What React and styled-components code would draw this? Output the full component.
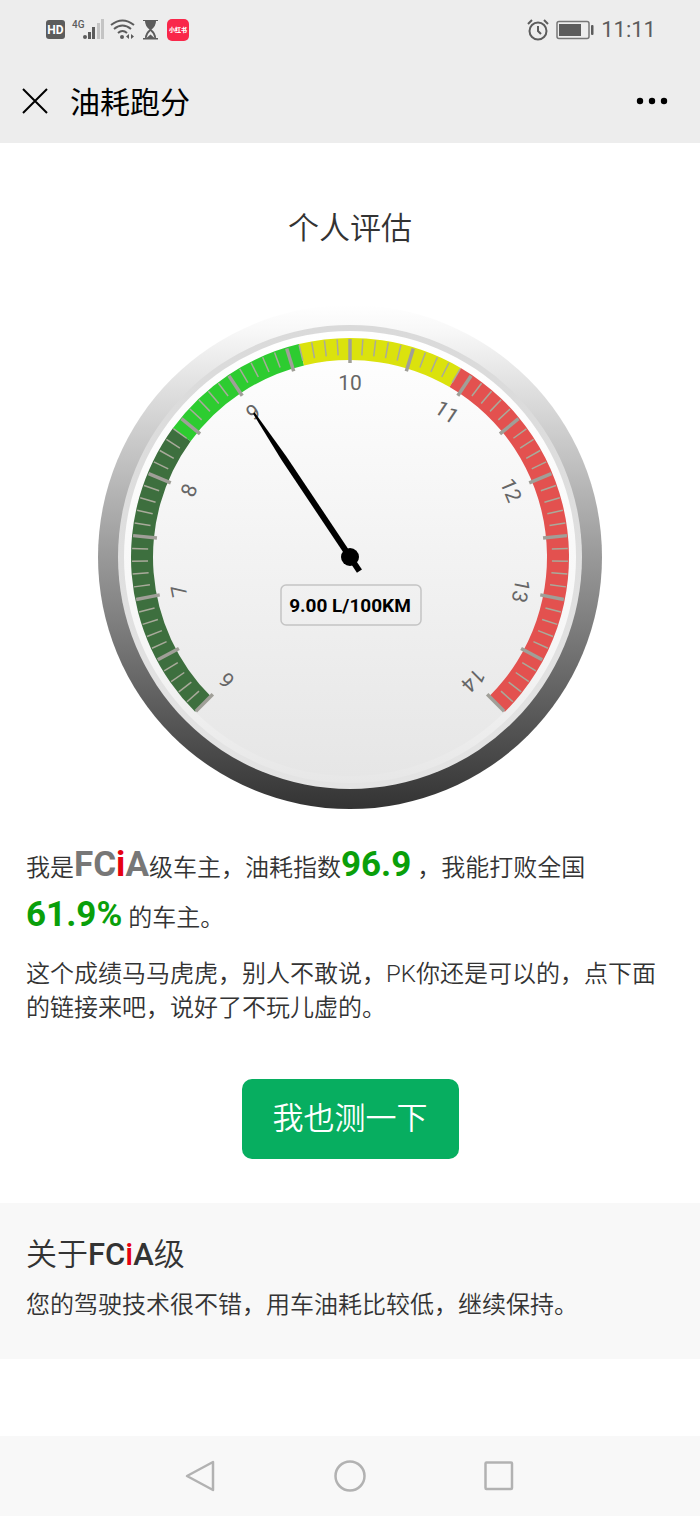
import React from 'react'
import styled, { createGlobalStyle } from 'styled-components'

const GlobalStyle = createGlobalStyle`
    * {
        box-sizing: border-box;
    }

    body {
        margin: 0;
        background: #fff;
        color: #333;
        font-family: Roboto, 'Noto Sans CJK SC', sans-serif;
        font-weight: 350;
    }

    button {
        font-family: inherit;
        font-weight: inherit;
        border: 0;
        padding: 0;
        background: none;
        cursor: pointer;
    }

    svg {
        display: block;
    }
`;

const Page = styled.div`
    min-height: 100vh;
    display: flex;
    flex-direction: column;
`;

const StatusBar = styled.div`
    height: 60px;
    padding: 0 44px 0 46px;
    display: flex;
    align-items: center;
    justify-content: space-between;
    background: #ededed;
    color: #5c5c5c;
`;

const StatusGroup = styled.div`
    display: flex;
    align-items: center;
    gap: ${props => props.$gap}px;
`;

const Clock = styled.span`
    font-size: 22px;
    line-height: 24px;
    font-weight: 400;
`;

const TitleBar = styled.header`
    height: 83px;
    padding: 0 32px 2px 22px;
    display: flex;
    align-items: center;
    background: #ededed;
    color: #000;

    h1 {
        flex: 1;
        margin: 4px 0 0 22px;
        font-size: 30px;
        line-height: 40px;
        font-weight: 400;
    }
`;

const Content = styled.main`
    flex: 1;
    padding-top: 62px;
`;

const Heading = styled.h2`
    margin: 0;
    text-align: center;
    font-size: 31px;
    line-height: 48px;
    font-weight: 350;
`;

const GaugeBox = styled.div`
    width: 72%;
    max-width: 504px;
    margin: 52px auto 0;

    svg {
        width: 100%;
        height: auto;
    }

    text {
        font-family: Roboto, sans-serif;
        text-anchor: middle;
    }
`;

const Summary = styled.p`
    margin: 34px 26px 0;
    font-size: 24px;
    line-height: 50px;
`;

const Score = styled.strong`
    color: #0a9f0a;
    font-size: 35px;
    line-height: 1;
    font-weight: 700;
`;

const Grade = styled.strong`
    color: ${props => props.$color || 'inherit'};
    font-size: ${props => props.$size}px;
    line-height: 1;
    font-weight: ${props => props.$weight};

    em {
        font-style: normal;
        color: #e60012;
    }
`;

const Comment = styled.p`
    margin: 14px 26px 0;
    font-size: 24px;
    line-height: 34px;
`;

const TestButton = styled.button`
    && {
        display: block;
        margin: 54px auto 0;
        padding: 0 31px 8px;
        height: 80px;
        border-radius: 10px;
        background: #07ae60;
        color: #fff;
        font-size: 31px;
    }
`;

const About = styled.section`
    margin-top: 44px;
    padding: 28px 26px 36px;
    background: #f8f8f8;

    h3 {
        margin: 0;
        font-size: 31px;
        line-height: 48px;
        font-weight: 350;
    }

    p {
        margin: 8px 0 0;
        font-size: 24px;
        line-height: 36px;
    }
`;

const NavBar = styled.nav`
    height: 80px;
    padding: 0 127px;
    display: grid;
    grid-template-columns: repeat(3, 1fr);
    background: #f8f8f8;

    button {
        display: flex;
        align-items: center;
        justify-content: center;
    }
`;

const CX = 252
const CY = 252
const MIN = 6
const MAX = 14
const VALUE = 9

const BANDS = [
    { from: 6, to: 8.4, color: '#3d6f3e' },
    { from: 8.4, to: 9.6, color: '#2dcc30' },
    { from: 9.6, to: 10.9, color: '#dbe20d' },
    { from: 10.9, to: 14, color: '#e3514f' }
]

const toAngle = value => -135 + (value - MIN) / (MAX - MIN) * 270

const point = (value, r) => {
    const rad = toAngle(value) * Math.PI / 180
    return `${CX + r * Math.sin(rad)} ${CY - r * Math.cos(rad)}`
}

const bandPath = (from, to) => {
    const large = toAngle(to) - toAngle(from) > 180 ? 1 : 0
    return `M${point(from, 219)} A219 219 0 ${large} 1 ${point(to, 219)}
        L${point(to, 197)} A197 197 0 ${large} 0 ${point(from, 197)} Z`
}

const ticks = Array.from({ length: 81 }, (_, i) => ({ value: MIN + i / 10, major: i % 5 === 0 }))
const labels = Array.from({ length: 9 }, (_, i) => MIN + i)

const Gauge = () => {
    return (
        <GaugeBox>
            <svg viewBox="0 0 504 504" role="img" aria-label="9.00 L/100KM">
                <defs>
                    <linearGradient id="rim" x1="0" y1="0" x2="0" y2="1">
                        <stop offset="0" stopColor="#fff" />
                        <stop offset="0.05" stopColor="#f8f8f8" />
                        <stop offset="0.5" stopColor="#999" />
                        <stop offset="1" stopColor="#333" />
                    </linearGradient>
                    <linearGradient id="face" x1="0" y1="0" x2="0" y2="1">
                        <stop offset="0" stopColor="#fff" />
                        <stop offset="1" stopColor="#e6e6e6" />
                    </linearGradient>
                    <linearGradient id="edge" x1="0" y1="0" x2="0" y2="1">
                        <stop offset="0" stopColor="#dadada" />
                        <stop offset="1" stopColor="#e4e4e4" />
                    </linearGradient>
                    <linearGradient id="shine" x1="0" y1="0" x2="0" y2="1">
                        <stop offset="0" stopColor="#fff" />
                        <stop offset="0.7" stopColor="#f6f6f6" />
                        <stop offset="1" stopColor="#e7e7e7" />
                    </linearGradient>
                </defs>
                <circle cx={CX} cy={CY} r="252" fill="url(#rim)" />
                <circle cx={CX} cy={CY} r="232" fill="url(#edge)" />
                <circle cx={CX} cy={CY} r="226" fill="url(#shine)" />
                <circle cx={CX} cy={CY} r="219" fill="url(#face)" />
                {BANDS.map(band => (
                    <path key={band.from} d={bandPath(band.from, band.to)} fill={band.color} />
                ))}
                {ticks.map(tick => (
                    <path
                        key={tick.value}
                        d={`M${point(tick.value, 218)} L${point(tick.value, tick.major ? 194 : 202)}`}
                        stroke={tick.major ? '#a09f98' : '#a9aa9b'}
                        strokeWidth={tick.major ? 3.5 : 1.5}
                    />
                ))}
                {labels.map(label => (
                    <text
                        key={label}
                        x={CX}
                        y={CY - 167}
                        fontSize="21"
                        fontWeight="400"
                        fill="#666"
                        transform={`rotate(${toAngle(label)} ${CX} ${CY})`}
                    >
                        {label}
                    </text>
                ))}
                <rect x="183" y="280" width="140" height="40" rx="5" fill="none" stroke="#c4c4c4" strokeWidth="1.5" />
                <text x="252" y="307" fontSize="19" fontWeight="700" fill="#000">9.00 L/100KM</text>
                <g transform={`rotate(${toAngle(VALUE)} ${CX} ${CY})`}>
                    <path d="M251 79 L249 133 L249 269 H255 V133 L253 79 Z" />
                </g>
                <circle cx={CX} cy={CY} r="9" />
            </svg>
        </GaugeBox>
    )
}

const GradeName = props => (
    <Grade {...props}>FC<em>i</em>A</Grade>
)

const SignalIcons = () => (
    <svg width="144" height="26" viewBox="46 17 144 26" fill="#5c5c5c">
        <rect x="46" y="20" width="19" height="19" rx="3" />
        <text x="55.5" y="34" fontSize="12" fontWeight="700" fill="#fff" textAnchor="middle" fontFamily="Roboto">HD</text>
        <text x="72" y="28" fontSize="10" fontWeight="500" fontFamily="Roboto">4G</text>
        <circle cx="85" cy="37" r="2" />
        <rect x="88" y="32" width="3" height="7" />
        <rect x="92" y="27" width="3" height="12" />
        <rect x="97" y="23" width="3" height="16" fill="#c4c4c4" />
        <rect x="101" y="19" width="3" height="20" fill="#c4c4c4" />
        <g fill="none" stroke="#5c5c5c" strokeWidth="2">
            <path d="M111 25 Q122.500 16 134 25" />
            <path d="M114 29 Q122.500 22 131 29" />
            <path d="M118 33 Q122.500 29 127 33" />
        </g>
        <circle cx="122" cy="37" r="2" />
        <path d="M129 34 V39 L126 36.500 Z M131 34 V39 L134 36.500 Z" />
        <path d="M143 20 H158 V21 H143 Z M143 38 H158 V39.500 H143 Z" />
        <path d="M145 21 H156 Q156 26 151.500 29.500 Q156 33 156 38 H145 Q145 33 149.500 29.500 Q145 26 145 21 Z" />
        <path d="M146.500 38 Q147 34 150.500 31 Q154 34 154.500 38 L150.500 34.500 Z" fill="#ededed" />
        <rect x="167" y="19" width="22" height="22" rx="5" fill="#f9274a" />
        <text x="178" y="32" fontSize="6" fontWeight="900" fill="#fff" textAnchor="middle" fontFamily="Noto Sans CJK SC">小红书</text>
    </svg>
)

const AlarmIcon = () => (
    <svg width="22" height="22" viewBox="0 0 22 22" fill="none" stroke="#5c5c5c" strokeWidth="2">
        <circle cx="11" cy="12" r="8.500" />
        <path d="M11 7 V12 L14 15 M1 5 L5 1 M21 5 L17 1" />
    </svg>
)

const BatteryIcon = () => (
    <svg width="38" height="20" viewBox="0 0 38 20" fill="#5c5c5c">
        <rect x="1" y="1.500" width="32" height="17" rx="2" fill="none" stroke="#777" strokeWidth="1.500" />
        <rect x="3" y="4" width="22" height="12" />
        <rect x="35" y="5" width="2.500" height="10" rx="1" />
    </svg>
)

const App = () => {
    return (
        <Page>
            <GlobalStyle />
            <StatusBar>
                <SignalIcons />
                <StatusGroup $gap={7}>
                    <AlarmIcon />
                    <BatteryIcon />
                    <Clock>11:11</Clock>
                </StatusGroup>
            </StatusBar>
            <TitleBar>
                <button aria-label="关闭">
                    <svg width="26" height="26" viewBox="0 0 26 26" fill="none" stroke="#000" strokeWidth="2">
                        <path d="M1 1 L25 25 M25 1 L1 25" />
                    </svg>
                </button>
                <h1>油耗跑分</h1>
                <button aria-label="更多">
                    <svg width="32" height="8" viewBox="0 0 32 8">
                        <circle cx="4" cy="4" r="3.200" />
                        <circle cx="16" cy="4" r="3.200" />
                        <circle cx="28" cy="4" r="3.200" />
                    </svg>
                </button>
            </TitleBar>
            <Content>
                <Heading>个人评估</Heading>
                <Gauge />
                <Summary>
                    我是<GradeName $size={35} $weight={700} $color="#777" />级车主，油耗指数<Score>96.9</Score> ，我能打败全国 <Score>61.9%</Score> 的车主。
                </Summary>
                <Comment>这个成绩马马虎虎，别人不敢说，PK你还是可以的，点下面的链接来吧，说好了不玩儿虚的。</Comment>
                <TestButton>我也测一下</TestButton>
                <About>
                    <h3>关于<GradeName $size={31} $weight={500} />级</h3>
                    <p>您的驾驶技术很不错，用车油耗比较低，继续保持。</p>
                </About>
            </Content>
            <NavBar>
                <button aria-label="返回">
                    <svg width="32" height="36" viewBox="0 0 32 36" fill="none" stroke="#b2b2b2" strokeWidth="2.500" strokeLinejoin="round">
                        <path d="M28 4 V32 L2 18 Z" />
                    </svg>
                </button>
                <button aria-label="主页">
                    <svg width="32" height="32" viewBox="0 0 32 32" fill="none" stroke="#b2b2b2" strokeWidth="2.500">
                        <circle cx="16" cy="16" r="14.500" />
                    </svg>
                </button>
                <button aria-label="最近任务">
                    <svg width="30" height="30" viewBox="0 0 30 30" fill="none" stroke="#b2b2b2" strokeWidth="2.500" strokeLinejoin="round">
                        <rect x="1.500" y="1.500" width="26.500" height="26.500" rx="1" />
                    </svg>
                </button>
            </NavBar>
        </Page>
    )
}

export default App
